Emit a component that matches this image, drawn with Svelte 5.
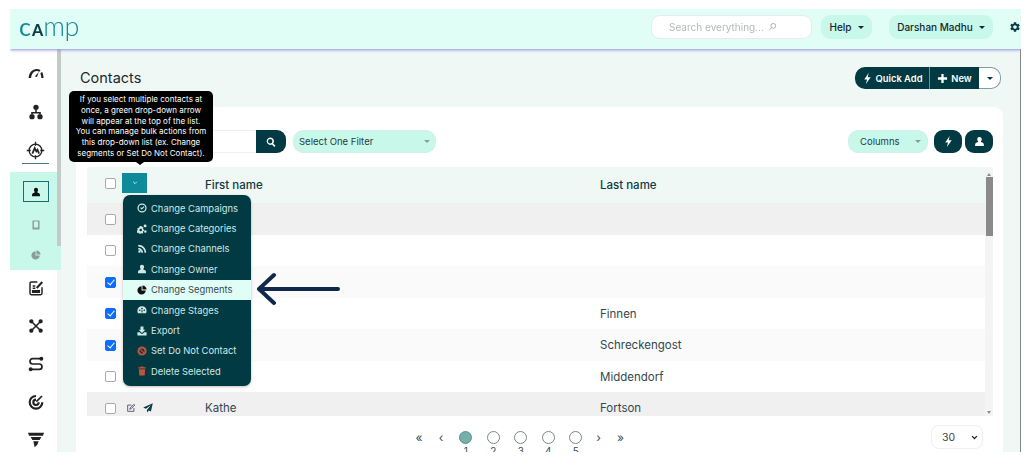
<script>
  const gear = 'M19.140 12.940c.04-.3.06-.61.06-.94 0-.32-.02-.64-.07-.94l2.030-1.580a.49.49 0 00.12-.61l-1.920-3.320a.488.488 0 00-.59-.22l-2.390.96c-.5-.38-1.030-.7-1.620-.94l-.36-2.540a.484.484 0 00-.48-.41h-3.840c-.24 0-.43.17-.47.41l-.36 2.540c-.59.24-1.130.57-1.620.94l-2.390-.96c-.22-.08-.47 0-.59.22L2.740 8.870c-.12.21-.08.47.12.61l2.030 1.580c-.05.3-.09.63-.09.94s.02.64.07.94l-2.030 1.580a.49.49 0 00-.12.61l1.920 3.320c.12.22.37.29.59.22l2.390-.96c.5.38 1.030.7 1.620.94l.36 2.540c.05.24.24.41.48.41h3.840c.24 0 .44-.17.47-.41l.36-2.540c.59-.24 1.130-.56 1.620-.94l2.390.96c.22.08.47 0 .59-.22l1.920-3.320c.12-.22.07-.47-.12-.61l-2.010-1.580zM12 15.600c-1.980 0-3.600-1.620-3.600-3.600s1.620-3.600 3.600-3.600 3.600 1.620 3.600 3.600-1.620 3.600-3.600 3.600z';
  const icons = {
    gauge: 'M1 18C1.500 10 6.500 4.500 13 4.500c2.200 0 4.200.6 5.800 1.700l-1.700 2.300C15.900 7.800 14.500 7.400 13 7.400 8.800 7.400 5.200 11.500 4.700 18zM21 8.500c1.500 2.400 2.200 5.800 2.300 9.500h-3.300c-.1-2.600-.6-4.900-1.500-6.600zM16.500 8.500l-3 7.500c-.6 1.400-3.200.4-2.600-1z',
    sitemap: 'M12 1a4 4 0 110 8 4 4 0 010-8zM10.800 9h2.400v3h6v3.500h-2.400V14.400H7.200v1.100H4.800V12h6zM6 15a4 4 0 110 8 4 4 0 010-8zM18 15a4 4 0 110 8 4 4 0 010-8z',
    user: 'M12 2a5 5 0 015 5c0 2.200-1 3.800-2.200 4.800 0 1 1 1.500 3 2.300 2.400.9 3.700 2.300 3.700 5v2.900h-19v-2.900c0-2.700 1.300-4.100 3.700-5 2-.8 3-1.300 3-2.300C8 10.800 7 9.200 7 7a5 5 0 015-5z',
    pie: 'M11 3v10h10a10 10 0 11-10-10zM13 1a10 10 0 0110 10H13z',
    tablet: 'M5 1h14a1.500 1.500 0 011.500 1.500v19A1.500 1.500 0 0119 23H5a1.500 1.500 0 01-1.500-1.500v-19A1.500 1.500 0 015 1zm2 2.500V18h10V3.500z',
    clock: 'M12 1a11 11 0 110 22 11 11 0 010-22zm0 3a8 8 0 100 16 8 8 0 000-16zm3.800 3.500l2 2L11.500 16 7.500 12.200l2-2 2 1.800z',
    cogs: 'M7 5h4l.5 2.200 2-.8 2.200 2.600-1.500 1.700.8 2.100 2 .7v3l-2.200.6-.8 2 1 2-2.500 2.200-1.800-1.300-2 .6L8 23.500H5l-.5-2-2-.8-1.800 1.200-1.200-6 2-.7.3-2.200L.4 11.400 2.600 8.700l2 .8zM9 11.500a3 3 0 100 6 3 3 0 000-6zM19.500 1a3.500 3.500 0 110 7 3.500 3.500 0 010-7zM20 15a3 3 0 110 6 3 3 0 010-6z',
    rss: 'M3 2c10.500 0 19 8.500 19 19h-3.800C18.200 12.600 11.400 5.800 3 5.800zM3 9.500c6.400 0 11.500 5.100 11.500 11.500h-3.800c0-4.300-3.400-7.700-7.700-7.700zM6 15a3 3 0 110 6 3 3 0 010-6z',
    stages: 'M12 3C5.500 3 1 8 1 14c0 2.200.5 4 1.200 6h19.600c.7-2 1.200-3.800 1.200-6 0-6-4.500-11-11-11zM6.500 10.500a2 2 0 110 4 2 2 0 010-4zM17.500 10.500a2 2 0 110 4 2 2 0 010-4zM12 6.500a2 2 0 110 4 2 2 0 010-4zM10.800 12.500h2.400V18h-2.400z',
    export: 'M8.500 1h7v8h4.500l-8 8-8-8h4.500zM1 15h5.500l3.500 3.500h4l3.500-3.500H23v8H1z',
    ban: 'M12 1a11 11 0 110 22 11 11 0 010-22zM6.300 8.300A7.300 7.300 0 0015.700 17.700zM8.300 6.300L17.700 15.700A7.300 7.300 0 008.300 6.300z',
    trash: 'M9 1h6l1 2h5v3H3V3h5zM4.500 8h15l-1 15h-13z',
    bolt: 'M14.500 0L5 14h6l-2.500 10L19 9.500h-6.500z',
    plus: 'M9.500 2h5v7.500H22v5h-7.500V22h-5v-7.500H2v-5h7.500z',
    gear,
    plane: 'M23.500 .5L.5 11l6.500 3L19 5 9.500 16.500V23l4.500-5 5 2.500z',
    search: 'M10 1a9 9 0 017.100 14.500l5.600 5.600-2.700 2.700-5.600-5.600A9 9 0 1110 1zm0 3.600a5.400 5.400 0 100 10.800 5.400 5.400 0 000-10.800z',
    funnel: 'M0 1h24l-1.500 4.500h-21zM4 7.500h16l-2.500 4.500h-11zM8 14h8l-2 5-4 4z'
  };
  const menu = [
    ['clock', 'Change Campaigns'], ['cogs', 'Change Categories'], ['rss', 'Change Channels'],
    ['user', 'Change Owner'], ['pie', 'Change Segments', 'active'], ['stages', 'Change Stages'],
    ['export', 'Export'], ['ban', 'Set Do Not Contact', 'danger'], ['trash', 'Delete Selected', 'danger']
  ];
  const rows = [
    { h: 32, bg: 'grey' }, { h: 31 }, { h: 32, bg: 'soft', checked: true },
    { h: 31, checked: true, last: 'Finnen' }, { h: 32, bg: 'soft', checked: true, last: 'Schreckengost' },
    { h: 31, last: 'Middendorf' }, { h: 32, bg: 'grey', first: 'Kathe', last: 'Fortson', tools: true }
  ];
  const tipLines = [
    'If you select multiple contacts at', 'once, a green drop-down arrow', 'will appear at the top of the list.',
    'You can manage bulk actions from', 'this drop-down list (ex. Change', 'segments or Set Do Not Contact).'
  ];
</script>

{#snippet icon(name, cls = '')}
  <svg class={'ic ' + cls} viewBox="0 0 24 24" aria-hidden="true"><path d={icons[name]} /></svg>
{/snippet}

<div class="frame">
  <header class="top">
    <div class="logo"><span class="c">c</span><span class="a">A</span><span class="mp">mp</span></div>
    <div class="top-right">
      <div class="global-search"><span>Search everything...</span>
        <svg class="mag" viewBox="0 0 24 24"><circle cx="14" cy="9" r="6.500" /><path d="M9 14l-6 7" /></svg>
      </div>
      <button class="pill help">Help <i class="caret"></i></button>
      <button class="pill user">Darshan Madhu <i class="caret"></i></button>
      <span class="gear">{@render icon('gear')}</span>
    </div>
  </header>

  <div class="body">
    <aside class="side">
      <div class="nav">{@render icon('gauge')}</div>
      <div class="nav">{@render icon('sitemap')}</div>
      <div class="nav target">
        <svg class="ic line big" viewBox="0 0 24 24" stroke="#222" stroke-width="1.700">
          <circle cx="12" cy="12" r="8" /><path d="M12 1v5M12 18v5M1 12h5M18 12h5" /><path d="M8 16l3-7 2 4 1.500-2 2 5" stroke-width="2.200" />
        </svg>
      </div>
      <div class="group">
        <div class="userbox">{@render icon('user', 'sm')}</div>
        <div class="sub">{@render icon('tablet', 'sm faded')}</div>
        <div class="sub">{@render icon('pie', 'sm faded')}</div>
      </div>
      <div class="nav tail">
        <svg class="ic line" viewBox="0 0 24 24" stroke="#222" stroke-width="2.200">
          <path d="M14 3H5a2 2 0 00-2 2v15a2 2 0 002 2h14a2 2 0 002-2v-9" />
          <path d="M7 9h4M7 12.500h4" /><path d="M7 16h10v2.500H7z" fill="#222" /><path d="M13 12l8.500-9" stroke-width="3" />
        </svg>
      </div>
      <div class="nav">
        <svg class="ic line" viewBox="0 0 24 24" stroke="#222" stroke-width="2.400">
          <path d="M6 6l12 12M18 6L6 18" /><g fill="#222"><circle cx="5" cy="5" r="2" /><circle cx="19" cy="5" r="2" /><circle cx="5" cy="19" r="2" /><circle cx="19" cy="19" r="2" /></g>
        </svg>
      </div>
      <div class="nav">
        <svg class="ic line" viewBox="0 0 24 24" stroke="#222" stroke-width="2.600">
          <path d="M19 4H7a4 4 0 000 8h10a4 4 0 010 8H5" /><g fill="#222"><circle cx="20" cy="4" r="1.700" /><circle cx="4" cy="20" r="1.700" /></g>
        </svg>
      </div>
      <div class="nav">
        <svg class="ic line" viewBox="0 0 24 24" stroke="#222" stroke-width="3.200">
          <path d="M12 3a9.500 9.500 0 109.500 9.500" /><path d="M12 8.500a4 4 0 104 4" /><path d="M12.500 11.500L21 3" stroke-width="2.600" />
        </svg>
      </div>
      <div class="nav">{@render icon('funnel')}</div>
      <div class="side-thumb"></div>
    </aside>

    <main class="main">
      <div class="title-row">
        <h1>Contacts</h1>
        <div class="actions">
          <button class="act quick">{@render icon('bolt')} Quick Add</button>
          <button class="act new">{@render icon('plus')} New</button>
          <button class="act more"><i class="caret"></i></button>
        </div>
      </div>

      <section class="card">
        <div class="toolbar">
          <div class="search-group">
            <div class="search-input"></div>
            <button class="search-btn">{@render icon('search')}</button>
          </div>
          <div class="select filter"><span>Select One Filter</span><i class="caret small"></i></div>
          <div class="tool-right">
            <div class="select columns"><span>Columns</span><i class="caret small"></i></div>
            <button class="sq">{@render icon('bolt')}</button>
            <button class="sq">{@render icon('user')}</button>
          </div>
        </div>

        <div class="table">
          <div class="thead">
            <span class="cell-check"><input type="checkbox" /></span>
            <span class="cell-tools"><button class="bulk"><svg viewBox="0 0 10 6"><path d="M2 1l3 3 3-3" /></svg></button></span>
            <span class="first th">First name</span>
            <span class="last th">Last name</span>
          </div>
          {#each rows as r}
            <div class={'row ' + (r.bg ?? '')} style:height={r.h + 'px'}>
              <span class="cell-check"><input type="checkbox" checked={r.checked} /></span>
              <span class="cell-tools">
                {#if r.tools}
                  <svg class="ic line tiny" viewBox="0 0 24 24" stroke="#446" stroke-width="2"><path d="M13 5H4v15h15v-8" /><path d="M9 15l1-3 9-9 2 2-9 9z" /></svg>
                  {@render icon('plane', 'tiny dark')}
                {/if}
              </span>
              <span class="first">{r.first ?? ''}</span>
              <span class="last">{r.last ?? ''}</span>
            </div>
          {/each}
          <div class="vscroll"><i class="up"></i><div class="thumb"></div><i class="down"></i></div>
        </div>

        <div class="pager">
          <div class="pages">
            <span class="chev">«</span><span class="chev">‹</span>
            {#each [1, 2, 3, 4, 5] as p}
              <div class="page"><i class:on={p === 1}></i><b>{p}</b></div>
            {/each}
            <span class="chev">›</span><span class="chev">»</span>
          </div>
          <div class="per">30 <svg viewBox="0 0 10 6"><path d="M1.500 1l3.500 3.500L8.500 1" /></svg></div>
        </div>
      </section>
    </main>
  </div>

  <div class="tip">
    {#each tipLines as line}<div>{line}</div>{/each}
  </div>

  <ul class="menu">
    {#each menu as [ic, label, kind]}
      <li class={kind ?? ''}>{@render icon(ic)}<span>{label}</span></li>
    {/each}
  </ul>

  <svg class="arrow" viewBox="0 0 86 36"><path d="M83 18H4M19 4L4 18l15 14" /></svg>
</div>

<style>
  :global(body) { margin: 0; background: #fff; }
  .frame {
    position: relative; width: 1011px; height: 443px; margin: 9px 0 0 10px;
    overflow: hidden; font-family: Inter, "Liberation Sans", sans-serif; color: #1c2b33;
    display: flex; flex-direction: column; filter: blur(.4px);
  }
  button { font-family: inherit; border: 0; padding: 0; cursor: pointer; }
  .ic { width: 14px; height: 14px; fill: currentColor; fill-rule: evenodd; display: block; flex: none; }
  .ic.line { fill: none; }

  .top {
    height: 40px; flex: none; background: #e0fdf6; display: flex; align-items: center;
    justify-content: space-between; position: relative; z-index: 2;
    box-shadow: 0 1px 3px #8d8fd8;
  }
  .logo { margin-left: 9px; padding-bottom: 7px; font-family: Lato, sans-serif; color: #118a97; display: flex; align-items: baseline; font-weight: 400; font-size: 27px; line-height: 1; }
  .logo .c { font-size: 25px; margin-right: 1px; }
  .logo .a { font-size: 16px; font-weight: 900; color: #0c3d49; }
  .logo .mp { letter-spacing: -.3px; font-weight: 300; }

  .top-right { display: flex; align-items: center; padding-bottom: 4px; }
  .global-search {
    width: 161px; height: 24px; box-sizing: border-box; background: #fff; border: 1px solid #e6ecea; border-radius: 9px;
    display: flex; align-items: center; padding-left: 17px; gap: 4px; font-size: 10px; color: #b4b8b8;
  }
  .mag { width: 9px; height: 10px; fill: none; stroke: #999; stroke-width: 2; }
  .pill { height: 24px; border-radius: 9px; background: #c8f8ea; color: #16262c; font-size: 10px; font-weight: 500; display: flex; align-items: center; justify-content: center; gap: 6px; }
  .help { width: 51px; margin-left: 9px; }
  .user { width: 104px; margin-left: 17px; }
  .caret { width: 0; height: 0; border: 3px solid transparent; border-top: 3px solid currentColor; border-bottom: 0; display: inline-block; }
  .gear { margin: 0 0 0 16px; color: #0b3c44; }
  .gear .ic { width: 12px; height: 12px; }

  .body { flex: 1; display: flex; min-height: 0; }
  .side { width: 51px; flex: none; position: relative; padding-top: 6px; background: linear-gradient(90deg, #fff 47px, #eff5f3 47px); }
  .nav { height: 38px; width: 47px; margin-left: 2px; display: flex; align-items: center; justify-content: center; color: #222; box-sizing: border-box; }
  .nav .ic { width: 16px; height: 16px; }
  .nav .ic.big { width: 19px; height: 19px; }
  .target { position: relative; }
  .target::after { content: ''; position: absolute; left: 10px; bottom: 5px; width: 27px; height: 1.500px; background: #4f7a7f; }
  .group { height: 98px; margin-top: 3px; background: #c8f8ea; display: flex; flex-direction: column; align-items: center; box-sizing: border-box; padding-top: 9px; }
  .userbox { width: 26px; height: 21px; box-sizing: border-box; border: 1px solid #1d6a72; display: flex; align-items: center; justify-content: center; color: #111; }
  .sm { width: 10px; height: 10px; }
  .faded { color: #8b9d99; }
  .sub { height: 30px; display: flex; align-items: center; justify-content: center; }
  .userbox + .sub { margin-top: 8px; }
  .tail { margin-top: -1px; }
  .side-thumb { position: absolute; top: 0; right: 0; width: 4px; height: 197px; background: #c3cbc9; }

  .main { flex: 1; background: #eff8f5; padding: 18px 17px 0 15px; min-width: 0; border-right: 1px solid #7f8a8a; display: flex; flex-direction: column; }
  .title-row { display: flex; align-items: center; justify-content: space-between; height: 22px; margin-bottom: 18px; flex: none; }
  h1 { font-size: 14.500px; font-weight: 400; margin: 0 0 2px 4px; color: #20292e; }
  .actions { display: flex; margin-right: 2px; height: 22px; }
  .act { height: 22px; background: #013a43; color: #fff; font-size: 9.400px; font-weight: 600; display: flex; align-items: center; justify-content: center; gap: 3px; }
  .act .ic { width: 11px; height: 11px; }
  .quick { width: 75px; border-radius: 10px 0 0 10px; border-right: 1px solid #6d9097; }
  .new { width: 49px; }
  .more { width: 22px; background: #fff; color: #013a43; border: 1px solid #7d9ea3; border-left: 0; border-radius: 0 10px 10px 0; box-sizing: border-box; }

  .card { flex: 1; background: #fff; border-radius: 9px 9px 0 0; padding: 23px 10px 0 11px; min-height: 0; display: flex; flex-direction: column; }
  .toolbar { display: flex; height: 23px; flex: none; margin-bottom: 14px; }
  .search-group { display: flex; width: 199px; }
  .search-input { flex: 1; border: 1px solid #eef0ef; border-right: 0; box-sizing: border-box; }
  .search-btn { width: 30px; background: #013a43; color: #fff; border-radius: 0 9px 9px 0; display: flex; align-items: center; justify-content: center; }
  .search-btn .ic { width: 10px; height: 10px; }
  .select { background: #c8f8ea; border: 1px solid #d6eee7; border-radius: 10px; box-sizing: border-box; font-size: 9.500px; color: #1f3c42; display: flex; align-items: center; justify-content: space-between; padding: 0 6px 0 5px; }
  .caret.small { color: #8a9c9a; }
  .filter { width: 143px; margin-left: 7px; padding-right: 5px; }
  .tool-right { margin-left: auto; display: flex; gap: 3px; }
  .columns { width: 80px; margin-right: 3px; padding-left: 11px; }
  .sq { width: 28px; background: #013a43; color: #fff; border-radius: 9px; display: flex; align-items: center; justify-content: center; }
  .sq .ic { width: 11px; height: 11px; }

  .table { height: 249px; flex: none; overflow: hidden; position: relative; }
  .thead, .row { display: flex; align-items: center; font-size: 11.500px; color: #33474f; }
  .thead { height: 36px; background: #eff8f5; }
  .thead .cell-check, .thead .cell-tools { padding-bottom: 4px; }
  .grey { background: #f0f0f0; }
  .soft { background: #fafafa; }
  .th { font-weight: 500; color: #0d3a44; }
  .cell-check { width: 46px; display: flex; justify-content: center; flex: none; }
  .cell-tools { width: 72px; flex: none; display: flex; align-items: center; gap: 7px; }
  .first { width: 395px; flex: none; }
  input[type='checkbox'] {
    appearance: none; margin: 0; width: 11px; height: 11px; border: 1px solid #a9a9a9; border-radius: 2px; background: #fff; position: relative; display: block;
  }
  input[type='checkbox']:checked { background: #0d6efd; border-color: #0d6efd; }
  input[type='checkbox']:checked::after { content: ''; position: absolute; left: 3px; top: 0; width: 4px; height: 7px; border: solid #fff; border-width: 0 1.600px 1.600px 0; transform: rotate(40deg); box-sizing: border-box; }
  .bulk { width: 25px; height: 20px; background: #0e8a9a; display: flex; align-items: center; justify-content: center; margin-left: -11px; }
  .bulk svg { width: 6px; height: 4px; fill: none; stroke: #d8f5f5; stroke-width: 1.500; }
  .tiny { width: 10px; height: 10px; }
  .cell-tools .tiny:first-child { margin-left: -7px; }
  .dark { color: #0b3c44; }
  .vscroll { position: absolute; top: 0; right: 0; bottom: 0; width: 8px; background: #f3f5f5; display: flex; flex-direction: column; align-items: center; }
  .thumb { width: 7px; height: 59px; background: #8a8a8a; margin-top: 1px; }
  .up, .down { width: 0; height: 0; border: 2px solid transparent; flex: none; }
  .up { border-bottom: 3px solid #8a8a8a; border-top: 0; margin-top: 6px; }
  .down { border-top: 3px solid #8a8a8a; border-bottom: 0; margin-top: auto; margin-bottom: 2px; }

  .pager { flex: 1; display: flex; position: relative; min-height: 0; }
  .pages { margin-left: 321px; display: flex; align-items: flex-start; padding-top: 14px; font-size: 11px; color: #667; }
  .chev { width: 22px; text-align: center; line-height: 16px; font-size: 12px; color: #37505a; }
  .page { width: 27.500px; display: flex; flex-direction: column; align-items: center; margin-top: 1px; }
  .page i { width: 11px; height: 11px; border: 1px solid #7c8787; border-radius: 50%; display: block; }
  .page i.on { background: #76b0ab; border-color: #5f8f8e; }
  .page b { font-weight: 400; font-size: 10px; line-height: 12px; color: #3a4d55; margin-top: 1px; }
  .page + .chev { margin-left: -2px; }
  .per { position: absolute; right: 10px; top: 9px; width: 52px; height: 24px; box-sizing: border-box; border: 1px solid #eef0ef; border-radius: 8px; font-size: 10.500px; color: #444; display: flex; align-items: center; justify-content: space-between; padding: 0 4px 0 10px; }
  .per svg { width: 7px; height: 5px; fill: none; stroke: #223; stroke-width: 1.800; }

  .tip {
    position: absolute; left: 59px; top: 82px; width: 144px; height: 71px; box-sizing: border-box; background: #000; border-radius: 5px; color: #fff;
    font-size: 8px; line-height: 10.800px; text-align: center; padding: 3px 0; z-index: 4; white-space: nowrap;
  }
  .tip::after { content: ''; position: absolute; left: 67px; bottom: -3px; border: 4px solid transparent; border-top: 3px solid #000; border-bottom: 0; }
  .menu {
    position: absolute; left: 113px; top: 186px; width: 128px; height: 191px; box-sizing: border-box; margin: 0; padding: 3px 0; list-style: none; background: #013a43; border-radius: 7px; z-index: 3;
    box-shadow: 0 1px 3px rgba(0,0,0,.25); color: #cfe8e6; font-size: 9.400px;
  }
  .menu li { height: 20.400px; display: flex; align-items: center; gap: 4px; padding-left: 14px; }
  .menu .ic { width: 10px; height: 10px; }
  .menu li.active { background: #e0fdf6; color: #33474f; }
  .menu li.active .ic { color: #111; }
  .menu li.danger .ic { color: #c0533d; }
  .arrow { position: absolute; left: 245px; top: 262px; width: 86px; height: 36px; fill: none; stroke: #10294a; stroke-width: 4; stroke-linecap: round; stroke-linejoin: round; z-index: 4; }
</style>
